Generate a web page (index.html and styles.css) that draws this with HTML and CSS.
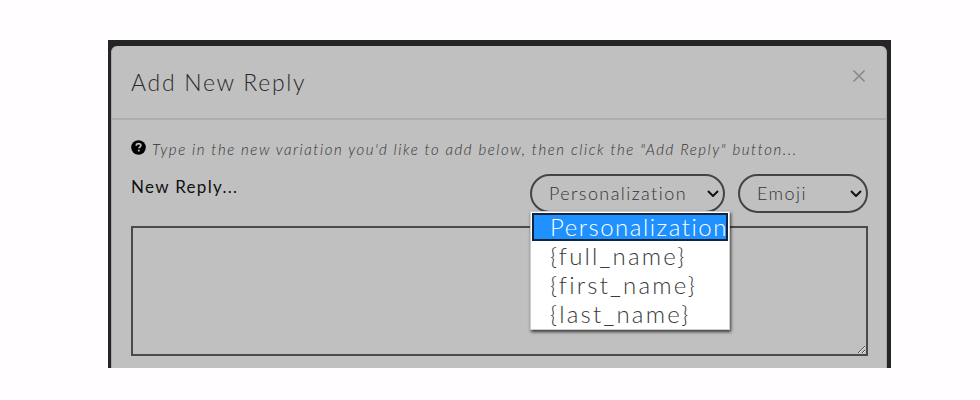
FILE: index.html
```html
<!DOCTYPE html>
<html lang="en">
<head>
<meta charset="utf-8">
<title>Add New Reply</title>
<link rel="stylesheet" href="styles.css">
</head>
<body>
<div class="backdrop">
  <div class="modal">
    <header class="modal-header">
      <h2 class="modal-title">Add New Reply</h2>
      <svg class="close" viewBox="0 0 14 14" width="14" height="14" aria-hidden="true"><path d="M1.5 1.5l11 11M12.5 1.5l-11 11" fill="none" stroke="#8a8a8a" stroke-width="1.7"/></svg>
    </header>
    <div class="modal-body">
      <p class="hint">
        <svg class="hint-icon" viewBox="0 0 16 16" width="16" height="16" aria-hidden="true"><circle cx="8" cy="8" r="7.8" fill="#000"/><path d="M5.6 6.2c0-1.5 1.1-2.3 2.5-2.3s2.4.8 2.4 2c0 1-.6 1.4-1.2 1.8-.5.3-.8.6-.8 1.2" fill="none" stroke="#c0c0c0" stroke-width="1.8"/><rect x="7.4" y="10.3" width="1.9" height="1.9" fill="#c0c0c0"/></svg>
        <em>Type in the new variation you'd like to add below, then click the "Add Reply" button...</em>
      </p>
      <div class="field-row">
        <label class="field-label">New Reply...</label>
        <div class="selects">
          <div class="select-wrap">
            <select class="pick pick-personal"><option>Personalization</option></select>
            <ul class="menu">
              <li class="menu-item active">Personalization</li>
              <li class="menu-item">{full_name}</li>
              <li class="menu-item">{first_name}</li>
              <li class="menu-item">{last_name}</li>
            </ul>
          </div>
          <select class="pick pick-emoji"><option>Emoji</option></select>
        </div>
      </div>
      <textarea class="reply"></textarea>
    </div>
  </div>
</div>
</body>
</html>
```

FILE: styles.css
```css
* { box-sizing: border-box; }
html, body { margin: 0; height: 100%; }
body {
  background: #fffdff;
  padding: 40px 0 0 108px;
  font-family: Lato, "Open Sans", sans-serif;
  overflow: hidden;
}
.backdrop {
  width: 783px;
  height: 328px;
  background: #252525;
  padding: 6px 4px 0 3px;
  overflow: hidden;
}
.modal {
  height: 340px;
  background: #c0c0c0;
  border-radius: 6px 6px 0 0;
  border-left: 1px solid #a8a8a8;
  border-right: 1px solid #a8a8a8;
}
.modal-header {
  height: 74px;
  display: flex;
  justify-content: space-between;
  padding: 0 20px 0 19px;
  border-bottom: 2px solid #adadad;
}
.modal-title {
  margin: 21px 0 0;
  font-size: 23px;
  line-height: 30px;
  font-weight: 300;
  letter-spacing: 1.7px;
  color: #2b2b2b;
}
.close {
  flex: none;
  margin-top: 23px;
}
.modal-body { padding: 19px 18px 0 19px; }
.hint {
  margin: 0;
  display: flex;
  align-items: center;
  gap: 6px;
  height: 20px;
  font-size: 15px;
  font-weight: 300;
  letter-spacing: 1.55px;
  color: #333;
}
.hint-icon { flex: none; width: 15px; height: 15px; margin-top: -3px; }
.field-row {
  display: flex;
  justify-content: space-between;
  margin-top: 15px;
}
.field-label {
  margin-top: 3px;
  font-size: 17px;
  line-height: 20px;
  letter-spacing: 1.3px;
  color: #111;
}
.selects { display: flex; gap: 13px; }
.select-wrap { position: relative; }
.pick {
  display: block;
  appearance: none;
  height: 39px;
  border: 2px solid #444;
  border-radius: 20px;
  background-color: #c0c0c0;
  background-image: url("data:image/svg+xml,%3Csvg xmlns='http://www.w3.org/2000/svg' width='12' height='7' viewBox='0 0 12 7'%3E%3Cpath d='M1 1l5 5 5-5' fill='none' stroke='%23111' stroke-width='2'/%3E%3C/svg%3E");
  background-repeat: no-repeat;
  background-position: right 4px center;
  color: #333;
  font-family: Lato, sans-serif;
  font-size: 18px;
  font-weight: 300;
  letter-spacing: 1.43px;
  padding: 0 18px 2px 17px;
}
.pick-personal { width: 195px; }
.pick-emoji { width: 130px; }
.menu {
  position: absolute;
  left: 0;
  top: 37px;
  width: 200px;
  margin: 0;
  padding: 1px;
  list-style: none;
  background: #fff;
  border: 1px solid #cfcfcf;
  box-shadow: 1px 2px 3px rgba(0, 0, 0, 0.7);
  font-size: 24px;
  font-weight: 300;
  letter-spacing: 2.2px;
  color: #3a3a3a;
}
.menu-item {
  height: 29px;
  line-height: 29px;
  padding-left: 18px;
  white-space: nowrap;
  overflow: hidden;
}
.menu-item.active {
  height: 28px;
  line-height: 27px;
  letter-spacing: 1.5px;
  background: #1e90ff;
  color: #fff;
  outline: 2px solid #10243c;
  outline-offset: -2px;
}
.reply {
  display: block;
  width: 737px;
  height: 130px;
  margin-top: 13px;
  background: #c0c0c0;
  border: 2px solid #4a4a4a;
  border-radius: 0;
}
```
